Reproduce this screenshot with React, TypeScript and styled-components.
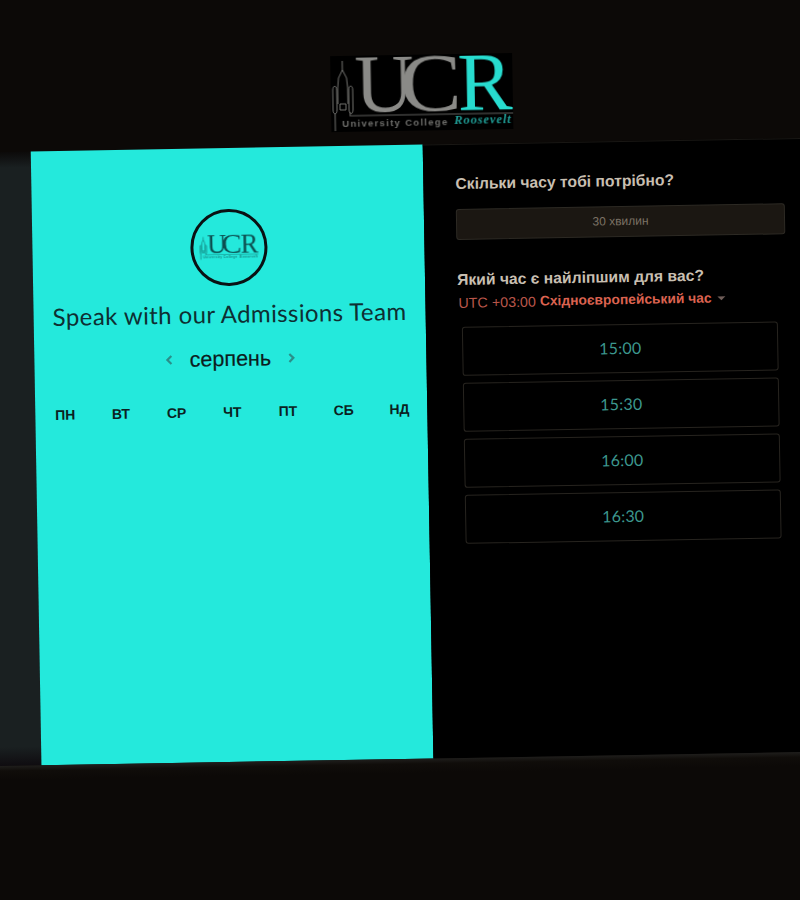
import React from 'react';
import styled, { createGlobalStyle } from 'styled-components';

const GlobalStyle = createGlobalStyle`
    html, body {
        margin: 0;
        padding: 0;
        width: 800px;
        height: 900px;
        overflow: hidden;
        background: #0c0907;
    }
    body {
        font-family: 'Liberation Sans', Arial, sans-serif;
    }
`;

const Stage = styled.div`
    width: 920px;
    height: 1020px;
    margin: -60px;
    display: flex;
    flex-direction: column;
    background: #0c0907;
    transform: rotate(-1deg);
    transform-origin: center;
`;

const Header = styled.header`
    flex: 0 0 204.5px;
    box-sizing: border-box;
    padding: 115px 0 0 96px;
`;

const HeaderInner = styled.div`
    width: 784px;
    display: flex;
    justify-content: center;
`;

const Main = styled.main`
    flex: 0 0 614.5px;
    display: flex;
`;

const SideStrip = styled.div`
    flex: 0 0 96px;
    background: linear-gradient(
        180deg,
        #0c0a09 0,
        #0f0f0f 4px,
        #1a2021 16px,
        #1a2021 595px,
        #0f0c10 614px
    );
`;

const BrandPanel = styled.section`
    flex: 0 0 392px;
    box-sizing: border-box;
    display: flex;
    flex-direction: column;
    align-items: center;
    padding-top: 61px;
    background: #24e9dc;
    color: #0c2224;
`;

const Seal = styled.div`
    width: 77px;
    height: 77px;
    box-sizing: border-box;
    border: 3px solid #0a1113;
    border-radius: 50%;
    display: flex;
    align-items: center;
    justify-content: center;
`;

const Title = styled.h1`
    margin: 11px 0 0;
    font-family: Lato, sans-serif;
    font-weight: 400;
    font-size: 24px;
    letter-spacing: 0.4px;
    line-height: 34px;
    color: #0e2f32;
    white-space: nowrap;
`;

const MonthRow = styled.div`
    margin-top: 12px;
    height: 32px;
    display: flex;
    align-items: center;
    gap: 14px;
`;

const MonthName = styled.span`
    font-size: 21.5px;
    line-height: 32px;
    color: #0c1c20;
    -webkit-text-stroke: 0.2px #0c1c20;
`;

const Chevron = styled.svg`
    width: 12px;
    height: 14px;
    fill: none;
    stroke: #2a8f8a;
    stroke-width: 2.2;
`;

const WeekGrid = styled.div`
    align-self: flex-end;
    width: 390px;
    margin-top: 28px;
    display: grid;
    grid-template-columns: repeat(7, 1fr);
`;

const WeekDay = styled.span`
    text-align: center;
    font-size: 14px;
    line-height: 18px;
    font-weight: 700;
    color: #0b1f22;
`;

const SchedulePanel = styled.section`
    flex: 1;
    box-sizing: border-box;
    padding: 29px 0 0 32px;
    background: #000;
    border-top: 1px solid #191714;
`;

const Question = styled.h2`
    margin: 0;
    font-size: 15.7px;
    line-height: 20px;
    font-weight: 700;
    color: #c8bfb1;
    white-space: nowrap;
`;

const DurationBox = styled.div`
    box-sizing: border-box;
    width: 329px;
    height: 31px;
    margin: 15px 0 30px;
    display: flex;
    align-items: center;
    justify-content: center;
    background: #1b1712;
    border: 1px solid #2d2a24;
    border-radius: 3px;
    font-size: 12px;
    color: #7c7265;
`;

const TimezoneRow = styled.div`
    margin: 4px 0 15px 1px;
    display: flex;
    align-items: center;
    font-size: 14.3px;
    line-height: 18px;
    color: #b9564a;
    white-space: nowrap;
`;

const TimezoneName = styled.strong`
    margin-left: 4px;
    font-size: 13.8px;
    color: #dc6350;
`;

const Caret = styled.span`
    width: 0;
    height: 0;
    margin: 0 0 0 6px;
    border-left: 4px solid transparent;
    border-right: 4px solid transparent;
    border-top: 4px solid #6e5d58;
`;

const SlotList = styled.div`
    width: 316px;
    margin-left: 4px;
    display: flex;
    flex-direction: column;
    gap: 7px;
`;

const Slot = styled.button`
    box-sizing: border-box;
    height: 49px;
    padding: 0 0 2px;
    background: #000;
    border: 1px solid #27241f;
    border-radius: 3px;
    font-family: Lato, sans-serif;
    font-size: 16px;
    letter-spacing: 0.2px;
    color: #3c978e;
`;

const Footer = styled.footer`
    flex: 1;
    background: linear-gradient(180deg, #1f1e1c 0, #100d0a 5px, #0c0907 14px);
`;

const LogoSvg = styled.svg<{ $dark?: boolean }>`
    display: block;
    flex: none;
    overflow: visible;
    background: ${props => (props.$dark ? 'transparent' : '#000')};
    filter: blur(${props => (props.$dark ? '0.2px' : '0.45px')});
`;

const LogoRule = styled.path<{ $dark?: boolean }>`
    fill: none;
    stroke: ${props => (props.$dark ? '#0d5d5c' : '#5f5f5d')};
    stroke-width: 1.2;
`;

const TowerPath = styled.path<{ $dark?: boolean }>`
    fill: none;
    stroke: ${props => (props.$dark ? '#15918c' : '#7f7f7c')};
    stroke-width: ${props => (props.$dark ? 2.6 : 0.9)};
`;

const LogoLetter = styled.text<{ $accent?: boolean; $dark?: boolean }>`
    font-family: 'Liberation Serif', 'Times New Roman', serif;
    font-size: 82px;
    fill: ${props =>
        props.$dark ? '#0c4f50' : props.$accent ? '#27dccf' : '#8a8a87'};
`;

const LogoCaption = styled.text<{ $dark?: boolean }>`
    font-family: 'Liberation Sans', Arial, sans-serif;
    font-size: 9.5px;
    font-weight: 700;
    letter-spacing: 1.3px;
    fill: ${props => (props.$dark ? '#17807d' : '#6f6f6c')};
`;

const LogoScript = styled.text<{ $dark?: boolean }>`
    font-family: 'Liberation Serif', 'Times New Roman', serif;
    font-size: 12.5px;
    font-style: italic;
    font-weight: 700;
    letter-spacing: 0.9px;
    fill: ${props => (props.$dark ? '#17807d' : '#1f9d96')};
`;

const UcrLogo: React.FC<{ width: number; dark?: boolean }> = ({
    width,
    dark,
}) => (
    <LogoSvg
        $dark={dark}
        width={width}
        height={(width * 76) / 182}
        viewBox="0 0 182 76"
    >
        <TowerPath
            $dark={dark}
            d="M12 5V14M12 14L8 22L7 32V48M12 14L16 22L17 32V48M2 34c0-5 4-5 4 0v20c0 5-4 5-4 0zM18 34c0-5 4-5 4 0v20c0 5-4 5-4 0zM4 58V75M9 48h6v6h-6z"
        />
        <LogoRule $dark={dark} d="M19 56V60H182" />
        <LogoLetter $dark={dark} x="24" y="56">
            U
        </LogoLetter>
        <LogoLetter
            $dark={dark}
            x="69"
            y="56"
            textLength={62}
            lengthAdjust="spacingAndGlyphs"
        >
            C
        </LogoLetter>
        <LogoLetter $dark={dark} $accent x="127" y="56">
            R
        </LogoLetter>
        <LogoCaption $dark={dark} x="11" y="71">
            University College
        </LogoCaption>
        <LogoScript $dark={dark} x="123" y="70">
            Roosevelt
        </LogoScript>
    </LogoSvg>
);

const weekDays = ['ПН', 'ВТ', 'СР', 'ЧТ', 'ПТ', 'СБ', 'НД'];
const slots = ['15:00', '15:30', '16:00', '16:30'];

const App: React.FC = () => (
    <>
        <GlobalStyle />
        <Stage>
            <Header>
                <HeaderInner>
                    <UcrLogo width={182} />
                </HeaderInner>
            </Header>
            <Main>
                <SideStrip />
                <BrandPanel>
                    <Seal>
                        <UcrLogo width={59} dark />
                    </Seal>
                    <Title>Speak with our Admissions Team</Title>
                    <MonthRow>
                        <Chevron viewBox="0 0 12 14">
                            <path d="M8 3L4 7l4 4" />
                        </Chevron>
                        <MonthName>серпень</MonthName>
                        <Chevron viewBox="0 0 12 14">
                            <path d="M4 3l4 4-4 4" />
                        </Chevron>
                    </MonthRow>
                    <WeekGrid>
                        {weekDays.map(day => (
                            <WeekDay key={day}>{day}</WeekDay>
                        ))}
                    </WeekGrid>
                </BrandPanel>
                <SchedulePanel>
                    <Question>Скільки часу тобі потрібно?</Question>
                    <DurationBox>30 хвилин</DurationBox>
                    <Question>Який час є найліпшим для вас?</Question>
                    <TimezoneRow>
                        UTC +03:00
                        <TimezoneName>Східноєвропейський час</TimezoneName>
                        <Caret />
                    </TimezoneRow>
                    <SlotList>
                        {slots.map(slot => (
                            <Slot key={slot}>{slot}</Slot>
                        ))}
                    </SlotList>
                </SchedulePanel>
            </Main>
            <Footer />
        </Stage>
    </>
);

export default App;
